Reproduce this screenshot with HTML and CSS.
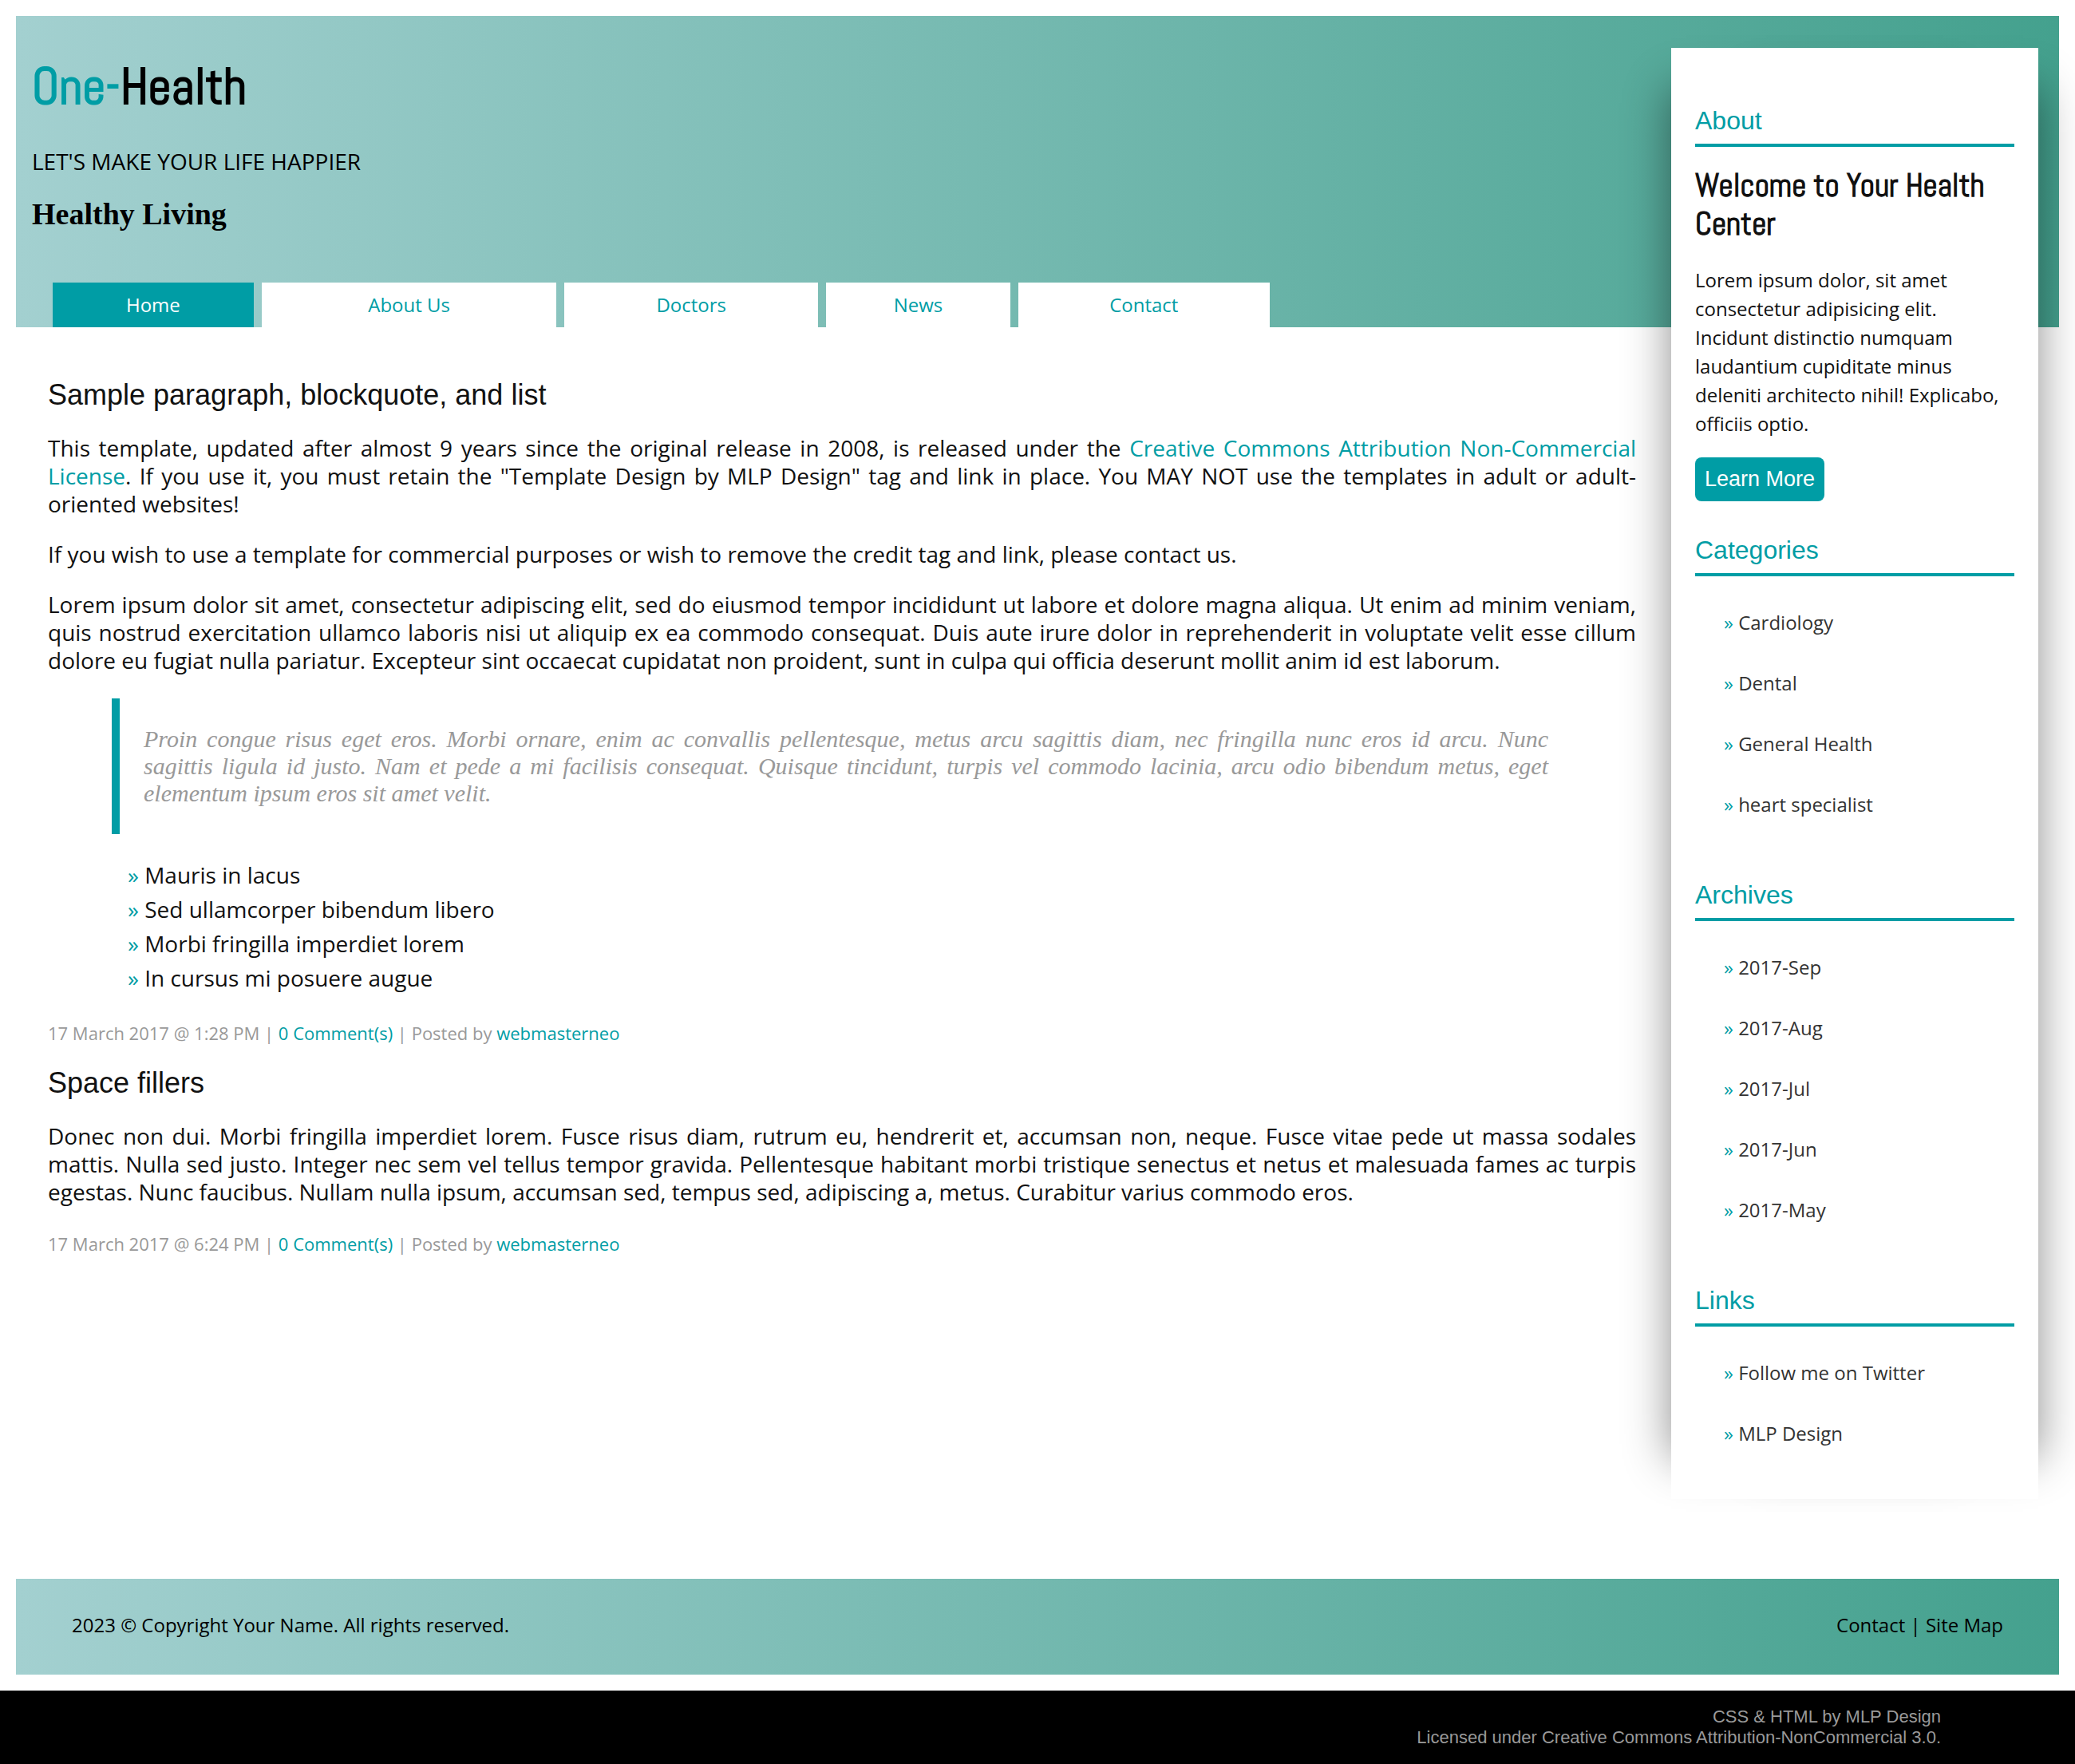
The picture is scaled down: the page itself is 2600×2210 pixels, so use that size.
FILE: index.html
```html
<!DOCTYPE html>
<html lang="en">
<head>
<meta charset="utf-8">
<meta name="viewport" content="width=device-width, initial-scale=1">
<title>One-Health</title>
<link rel="stylesheet" href="styles.css">
</head>
<body>
<div class="page">
  <header class="header">
    <h1 class="logo"><span class="logo-accent">One-</span>Health</h1>
    <p class="tagline">LET'S MAKE YOUR LIFE HAPPIER</p>
    <h2 class="slogan">Healthy Living</h2>
    <nav class="nav">
      <a class="nav-link active" href="#">Home</a>
      <a class="nav-link" href="#">About Us</a>
      <a class="nav-link" href="#">Doctors</a>
      <a class="nav-link" href="#">News</a>
      <a class="nav-link" href="#">Contact</a>
    </nav>
  </header>

  <main class="main">
    <article class="post">
      <h2 class="post-title">Sample paragraph, blockquote, and list</h2>
      <p class="text">This template, updated after almost 9 years since the original release in 2008, is released under the <a href="#">Creative Commons Attribution Non-Commercial License</a>. If you use it, you must retain the "Template Design by MLP Design" tag and link in place. You MAY NOT use the templates in adult or adult-oriented websites!</p>
      <p class="text">If you wish to use a template for commercial purposes or wish to remove the credit tag and link, please contact us.</p>
      <p class="text">Lorem ipsum dolor sit amet, consectetur adipiscing elit, sed do eiusmod tempor incididunt ut labore et dolore magna aliqua. Ut enim ad minim veniam, quis nostrud exercitation ullamco laboris nisi ut aliquip ex ea commodo consequat. Duis aute irure dolor in reprehenderit in voluptate velit esse cillum dolore eu fugiat nulla pariatur. Excepteur sint occaecat cupidatat non proident, sunt in culpa qui officia deserunt mollit anim id est laborum.</p>
      <blockquote class="quote">Proin congue risus eget eros. Morbi ornare, enim ac convallis pellentesque, metus arcu sagittis diam, nec fringilla nunc eros id arcu. Nunc sagittis ligula id justo. Nam et pede a mi facilisis consequat. Quisque tincidunt, turpis vel commodo lacinia, arcu odio bibendum metus, eget elementum ipsum eros sit amet velit.</blockquote>
      <ul class="list">
        <li>Mauris in lacus</li>
        <li>Sed ullamcorper bibendum libero</li>
        <li>Morbi fringilla imperdiet lorem</li>
        <li>In cursus mi posuere augue</li>
      </ul>
      <p class="meta">17 March 2017 @ 1:28 PM | <a href="#">0 Comment(s)</a> | Posted by <a href="#">webmasterneo</a></p>
    </article>
    <article class="post">
      <h2 class="post-title">Space fillers</h2>
      <p class="text">Donec non dui. Morbi fringilla imperdiet lorem. Fusce risus diam, rutrum eu, hendrerit et, accumsan non, neque. Fusce vitae pede ut massa sodales mattis. Nulla sed justo. Integer nec sem vel tellus tempor gravida. Pellentesque habitant morbi tristique senectus et netus et malesuada fames ac turpis egestas. Nunc faucibus. Nullam nulla ipsum, accumsan sed, tempus sed, adipiscing a, metus. Curabitur varius commodo eros.</p>
      <p class="meta">17 March 2017 @ 6:24 PM | <a href="#">0 Comment(s)</a> | Posted by <a href="#">webmasterneo</a></p>
    </article>
  </main>

  <aside class="sidebar">
    <section class="widget">
      <h3 class="widget-title">About</h3>
      <h2 class="welcome">Welcome to Your Health Center</h2>
      <p class="about">Lorem ipsum dolor, sit amet consectetur adipisicing elit. Incidunt distinctio numquam laudantium cupiditate minus deleniti architecto nihil! Explicabo, officiis optio.</p>
      <button class="button" type="button">Learn More</button>
    </section>
    <section class="widget">
      <h3 class="widget-title">Categories</h3>
      <ul class="links">
        <li><a href="#">Cardiology</a></li>
        <li><a href="#">Dental</a></li>
        <li><a href="#">General Health</a></li>
        <li><a href="#">heart specialist</a></li>
      </ul>
    </section>
    <section class="widget">
      <h3 class="widget-title">Archives</h3>
      <ul class="links">
        <li><a href="#">2017-Sep</a></li>
        <li><a href="#">2017-Aug</a></li>
        <li><a href="#">2017-Jul</a></li>
        <li><a href="#">2017-Jun</a></li>
        <li><a href="#">2017-May</a></li>
      </ul>
    </section>
    <section class="widget">
      <h3 class="widget-title">Links</h3>
      <ul class="links">
        <li><a href="#">Follow me on Twitter</a></li>
        <li><a href="#">MLP Design</a></li>
      </ul>
    </section>
  </aside>

  <footer class="footer">
    <p>2023 © Copyright Your Name. All rights reserved.</p>
    <p><a href="#">Contact</a> | <a href="#">Site Map</a></p>
  </footer>
</div>
<div class="credits">
  <p><a href="#">CSS &amp; HTML</a> by <a href="#">MLP Design</a></p>
  <p>Licensed under <a href="#">Creative Commons Attribution-NonCommercial 3.0.</a></p>
</div>
</body>
</html>
```
FILE: styles.css
```css
:root {
  --teal: #009da5;
  --ink: #111;
  --muted: #999;
  --band: linear-gradient(90deg, #a3d0d0, #44a18e);
  --sans: "Liberation Sans", Arial, sans-serif;
  --display: Abel, "Roboto Condensed", Roboto, sans-serif;
}

* {
  box-sizing: border-box;
  margin: 0;
  padding: 0;
}

body {
  background: #fff;
  color: var(--ink);
  font: 28px/35px "Open Sans", sans-serif;
}

a {
  color: var(--teal);
  text-decoration: none;
}

ul {
  list-style: none;
}

/* The sidebar shares the header's row, so it rises over the band */
.page {
  display: grid;
  grid-template-columns: minmax(0, 1fr) 460px 26px;
  grid-template-rows: auto 1fr auto;
  padding: 20px;
}

.header {
  grid-area: 1 / 1 / 2 / 4;
  padding: 48px 20px 0;
  background: var(--band);
  color: #000;
}

.logo {
  margin-bottom: 37px;
  font: 700 64px/80px var(--display);
}

.logo-accent {
  color: var(--teal);
}

.tagline {
  margin-bottom: 26px;
}

.slogan {
  margin-bottom: 64px;
  font: 700 38px/44px "Liberation Serif", "Times New Roman", serif;
}

.nav {
  display: grid;
  grid-template-columns: 252fr 370fr 318fr 231fr 315fr;
  gap: 10px;
  width: 60.5%;
  margin-left: 26px;
}

.nav-link {
  padding: 12px;
  background: #fff;
  font-size: 24px;
  line-height: 32px;
  text-align: center;
}

.nav-link.active {
  background: var(--teal);
  color: #fff;
}

.main {
  grid-area: 2 / 1 / 3 / 2;
  padding: 63px 44px 40px 40px;
}

.post + .post {
  margin-top: 26px;
}

.post-title {
  margin-bottom: 27px;
  font: 400 36px/44px var(--sans);
}

.text {
  text-align: justify;
}

.text + .text {
  margin-top: 28px;
}

.quote {
  margin: 30px 80px;
  padding: 34px 30px;
  border-left: 10px solid var(--teal);
  color: var(--muted);
  font: italic 30px/34px "Liberation Serif", "Times New Roman", serif;
  text-align: justify;
}

.list {
  padding-left: 100px;
  line-height: 43px;
}

.list li::before,
.links li::before {
  content: "» ";
  color: var(--teal);
}

.meta {
  margin-top: 32px;
  color: var(--muted);
  font-size: 22px;
  line-height: 30px;
}

.sidebar {
  grid-area: 1 / 2 / 3 / 3;
  align-self: start;
  margin-top: 40px;
  padding: 71px 30px 44px;
  background: #fff;
  box-shadow: 50px 0 54px -50px rgba(0, 0, 0, 0.45), -50px 0 54px -50px rgba(0, 0, 0, 0.45);
}

.widget + .widget {
  margin-top: 55px;
}

.widget:first-child + .widget {
  margin-top: 41px;
}

.widget-title {
  padding-bottom: 9px;
  border-bottom: 4px solid var(--teal);
  color: var(--teal);
  font: 400 32px/40px var(--sans);
}

.welcome {
  margin: 25px 0 28px;
  font: 700 40px/48px var(--display);
}

.about {
  font-size: 24px;
  line-height: 36px;
}

.button {
  display: block;
  margin-top: 24px;
  padding: 12px;
  border: 0;
  border-radius: 8px;
  background: var(--teal);
  color: #fff;
  font: 27px/31px var(--sans);
}

.links {
  margin-top: 20px;
  padding-left: 36px;
  font-size: 24px;
  line-height: 76px;
}

.links a {
  color: #333;
}

.footer {
  grid-area: 3 / 1 / 4 / 4;
  display: flex;
  justify-content: space-between;
  margin-top: 100px;
  padding: 42px 70px 46px;
  background: var(--band);
  color: #000;
  font-size: 24px;
  line-height: 32px;
}

.footer a {
  color: inherit;
}

.credits {
  padding: 20px 168px 20px 20px;
  background: #000;
  color: var(--muted);
  font: 22px/26px var(--sans);
  text-align: right;
}

.credits a {
  color: inherit;
}
```
